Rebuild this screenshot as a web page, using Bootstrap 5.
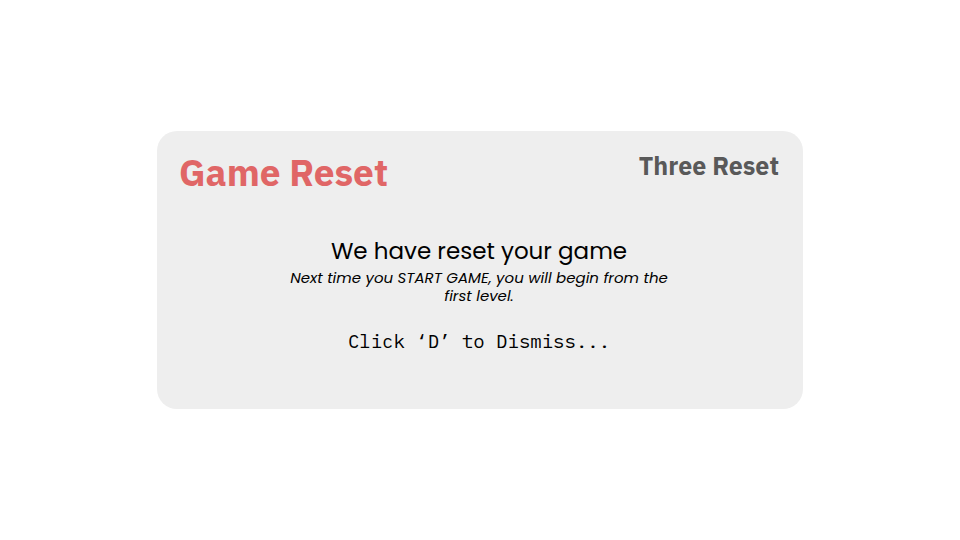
<!DOCTYPE html>
<html lang="en">
<head>
<meta charset="utf-8">
<meta name="viewport" content="width=device-width, initial-scale=1">
<title>Game Reset</title>
<link href="https://cdn.jsdelivr.net/npm/bootstrap@5.3.0/dist/css/bootstrap.min.css" rel="stylesheet">
<style>
  body { background: #fff; color: #000; font-family: Poppins, "Open Sans", sans-serif; }
  .dialog-panel { width: 100%; max-width: 646px; background: #eee; border-radius: 20px; padding: 20px 24px 54px 22px; }
  .dialog-title, .dialog-label { font-family: "IBM Plex Sans", "Noto Sans", sans-serif; font-weight: 700; }
  .dialog-title { font-size: 37px; line-height: 42px; color: #e06666; }
  .dialog-label { font-size: 25px; line-height: 30px; color: #595959; }
  .dialog-message { max-width: 400px; margin-top: 41px; }
  .message-lead { font-size: 23px; line-height: 35px; }
  .message-note { font-size: 15px; line-height: 18px; }
  .message-key { font-family: "IBM Plex Mono", "Liberation Mono", monospace; font-size: 19px; line-height: 28px; margin-top: 22px; }
</style>
</head>
<body>
<main class="container-fluid min-vh-100 d-flex align-items-center justify-content-center">
  <section class="dialog-panel" role="dialog" aria-labelledby="dialog-title">
    <header class="d-flex justify-content-between align-items-start">
      <h1 class="dialog-title m-0" id="dialog-title">Game Reset</h1>
      <p class="dialog-label m-0">Three Reset</p>
    </header>
    <div class="dialog-message mx-auto text-center">
      <p class="message-lead mb-0">We have reset your game</p>
      <p class="message-note fst-italic mb-0">Next time you START GAME, you will begin from the first level.</p>
      <p class="message-key mb-0">Click ‘D’ to Dismiss...</p>
    </div>
  </section>
</main>
<script src="https://cdn.jsdelivr.net/npm/bootstrap@5.3.0/dist/js/bootstrap.bundle.min.js"></script>
</body>
</html>
